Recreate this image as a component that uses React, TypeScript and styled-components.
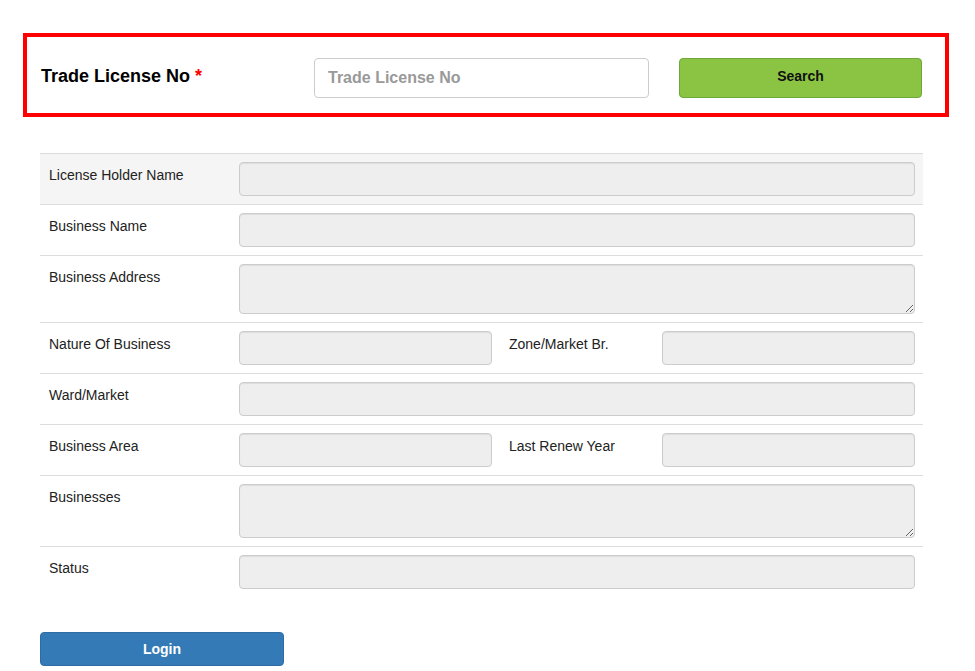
import styled, { createGlobalStyle } from "styled-components";

const GlobalStyle = createGlobalStyle`
  body {
    margin: 0;
    background: #ffffff;
    font-family: "Liberation Sans", Arial, sans-serif;
    font-size: 14px;
    color: #333333;
  }
  * {
    box-sizing: border-box;
  }
`;

const Wrapper = styled.div`
  padding-top: 33px;
  padding-bottom: 5px;
`;

const SearchPanel = styled.div`
  margin: 0 26px 0 23px;
  border: 4px solid #ff0000;
  padding: 21px 23px 15px 14px;
  display: grid;
  grid-template-columns: 243px 335px 243px;
  column-gap: 30px;
  align-items: center;
`;

const PanelLabel = styled.label`
  font-size: 18px;
  font-weight: bold;
  color: #000000;
  margin-top: -3px;
`;

const Required = styled.span`
  color: #ff0000;
  margin-left: 5px;
`;

const SearchInput = styled.input`
  height: 40px;
  width: 100%;
  border: 1px solid #cccccc;
  border-radius: 4px;
  padding: 0 13px;
  font-family: inherit;
  font-size: 16px;
  font-weight: bold;
  color: #555555;
  outline: none;
  &::placeholder {
    color: #999999;
  }
`;

const Button = styled.button<{ $variant: "search" | "login" }>`
  height: ${(p) => (p.$variant === "search" ? "40px" : "34px")};
  border-radius: 4px;
  border: 1px solid
    ${(p) => (p.$variant === "search" ? "#6ca83c" : "#2e6da4")};
  background: ${(p) => (p.$variant === "search" ? "#8bc443" : "#337ab7")};
  color: ${(p) => (p.$variant === "search" ? "#111111" : "#ffffff")};
  font-family: inherit;
  font-size: 14px;
  font-weight: bold;
  cursor: pointer;
  padding: 0 0 4px;
`;

const DetailTable = styled.div`
  margin: 36px 52px 0 40px;
`;

const Row = styled.div<{ $striped?: boolean }>`
  display: grid;
  grid-template-columns: 191px 269px 154px 269px;
  border-top: 1px solid #dddddd;
  background: ${(p) => (p.$striped ? "#f5f5f5" : "transparent")};
`;

const Cell = styled.div<{ $span?: number }>`
  padding: 8px;
  grid-column: span ${(p) => p.$span || 1};
`;

const Label = styled.div`
  padding: 3px 0 0 1px;
  line-height: 20px;
  font-size: 14px;
  color: #222222;
`;

const Field = styled.input`
  display: block;
  width: 100%;
  height: 34px;
  border: 1px solid #cccccc;
  border-radius: 4px;
  background: #eeeeee;
  box-shadow: inset 0 1px 1px rgba(0, 0, 0, 0.075);
  outline: none;
`;

const AreaField = styled.textarea<{ $height: number }>`
  display: block;
  width: 100%;
  height: ${(p) => p.$height}px;
  border: 1px solid #cccccc;
  border-radius: 4px;
  background: #eeeeee;
  box-shadow: inset 0 1px 1px rgba(0, 0, 0, 0.075);
  outline: none;
  resize: vertical;
`;

const Footer = styled.div`
  margin: 35px 0 0 40px;
`;

const LoginButton = styled(Button)`
  width: 244px;
  padding: 0;
`;

function App() {
  return (
    <Wrapper>
      <GlobalStyle />
      <SearchPanel>
        <PanelLabel>
          Trade License No<Required>*</Required>
        </PanelLabel>
        <SearchInput placeholder="Trade License No" />
        <Button $variant="search">Search</Button>
      </SearchPanel>

      <DetailTable>
        <Row $striped>
          <Cell><Label>License Holder Name</Label></Cell>
          <Cell $span={3}><Field readOnly /></Cell>
        </Row>
        <Row>
          <Cell><Label>Business Name</Label></Cell>
          <Cell $span={3}><Field readOnly /></Cell>
        </Row>
        <Row>
          <Cell><Label>Business Address</Label></Cell>
          <Cell $span={3}><AreaField readOnly $height={50} /></Cell>
        </Row>
        <Row>
          <Cell><Label>Nature Of Business</Label></Cell>
          <Cell><Field readOnly /></Cell>
          <Cell><Label>Zone/Market Br.</Label></Cell>
          <Cell><Field readOnly /></Cell>
        </Row>
        <Row>
          <Cell><Label>Ward/Market</Label></Cell>
          <Cell $span={3}><Field readOnly /></Cell>
        </Row>
        <Row>
          <Cell><Label>Business Area</Label></Cell>
          <Cell><Field readOnly /></Cell>
          <Cell><Label>Last Renew Year</Label></Cell>
          <Cell><Field readOnly /></Cell>
        </Row>
        <Row>
          <Cell><Label>Businesses</Label></Cell>
          <Cell $span={3}><AreaField readOnly $height={54} /></Cell>
        </Row>
        <Row>
          <Cell><Label>Status</Label></Cell>
          <Cell $span={3}><Field readOnly /></Cell>
        </Row>
      </DetailTable>

      <Footer>
        <LoginButton $variant="login">Login</LoginButton>
      </Footer>
    </Wrapper>
  );
}

export default App;
